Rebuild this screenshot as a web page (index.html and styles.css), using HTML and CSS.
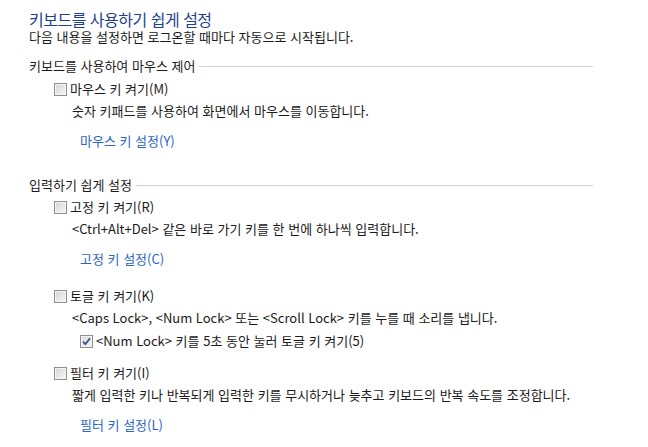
FILE: index.html
```html
<!DOCTYPE html>
<html lang="ko">
<head>
<meta charset="utf-8">
<link rel="stylesheet" href="styles.css">
</head>
<body>
<div class="page">
  <h1 class="title">키보드를 사용하기 쉽게 설정</h1>
  <p class="subtitle">다음 내용을 설정하면 로그온할 때마다 자동으로 시작됩니다.</p>

  <div class="section-head first"><span>키보드를 사용하여 마우스 제어</span><i class="rule"></i></div>
  <div class="group top1">
    <label class="check"><span class="box"></span>마우스 키 켜기(M)</label>
    <p class="desc">숫자 키패드를 사용하여 화면에서 마우스를 이동합니다.</p>
    <a class="link" href="#">마우스 키 설정(Y)</a>
  </div>

  <div class="section-head second"><span>입력하기 쉽게 설정</span><i class="rule"></i></div>
  <div class="group top2">
    <label class="check"><span class="box"></span>고정 키 켜기(R)</label>
    <p class="desc">&lt;Ctrl+Alt+Del&gt; 같은 바로 가기 키를 한 번에 하나씩 입력합니다.</p>
    <a class="link" href="#">고정 키 설정(C)</a>
  </div>
  <div class="group next">
    <label class="check"><span class="box"></span>토글 키 켜기(K)</label>
    <p class="desc">&lt;Caps Lock&gt;, &lt;Num Lock&gt; 또는 &lt;Scroll Lock&gt; 키를 누를 때 소리를 냅니다.</p>
    <label class="check sub"><span class="box checked"><svg viewBox="0 0 9 9" width="9" height="9"><path d="M1 4.6 L3.4 7.2 L8 1.2" fill="none" stroke="#3b4f8c" stroke-width="1.8" stroke-linejoin="round"/></svg></span>&lt;Num Lock&gt; 키를 5초 동안 눌러 토글 키 켜기(5)</label>
  </div>
  <div class="group after-sub">
    <label class="check"><span class="box"></span>필터 키 켜기(I)</label>
    <p class="desc">짧게 입력한 키나 반복되게 입력한 키를 무시하거나 늦추고 키보드의 반복 속도를 조정합니다.</p>
    <a class="link" href="#">필터 키 설정(L)</a>
  </div>
</div>
</body>
</html>
```

FILE: styles.css
```css
html, body {
  margin: 0;
  padding: 0;
  background: #ffffff;
}
body {
  font-family: "Noto Sans CJK KR", "Noto Sans", sans-serif;
  font-size: 13px;
  color: #1a1a1a;
}
.page {
  padding: 10px 0 0 29px;
  width: 564px;
}
.title {
  margin: 0;
  font-size: 16px;
  letter-spacing: -0.5px;
  line-height: 19px;
  font-weight: normal;
  color: #1e3f8e;
}
.subtitle {
  margin: 1px 0 0;
  line-height: 14px;
}
.section-head {
  display: flex;
  align-items: center;
  line-height: 16px;
  height: 16px;
}
.section-head.first { margin-top: 14px; }
.section-head.second { margin-top: 28px; }
.rule {
  flex: 1;
  height: 0;
  border-top: 1px solid #d4d4d4;
  margin-left: 4px;
  margin-top: 1px;
}
.group {
  display: flex;
  flex-direction: column;
  align-items: flex-start;
  padding-left: 25px;
}
.group.top1 { margin-top: 7px; }
.group.top2 { margin-top: 6px; }
.group.next { margin-top: 21px; }
.group.after-sub { margin-top: 16px; }
.check {
  display: flex;
  align-items: center;
  height: 16px;
  line-height: 16px;
}
.box {
  box-sizing: border-box;
  width: 13px;
  height: 13px;
  border: 1px solid #8f8f8f;
  background: linear-gradient(135deg, #d2d2d2 0%, #e6e6e6 50%, #f6f6f6 100%);
  box-shadow: inset 0 0 0 1px #f4f4f4;
  margin-right: 3px;
  display: flex;
  align-items: center;
  justify-content: center;
}
.box.checked {
  background: linear-gradient(135deg, #dedede 0%, #f2f2f2 100%);
}
.desc {
  margin: 6px 0 0 18px;
  line-height: 16px;
}
.check.sub {
  margin: 7px 0 0 26px;
}
.link {
  margin: 14px 0 0 26px;
  line-height: 16px;
  color: #2a66c4;
  text-decoration: none;
}
```
